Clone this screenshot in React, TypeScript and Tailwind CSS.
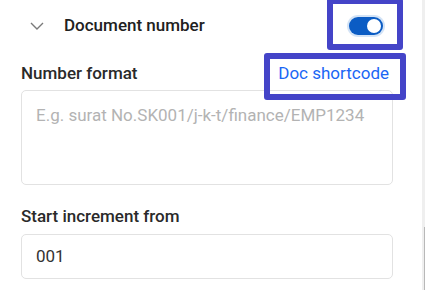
export default function App() {
  return (
    <div className="relative w-[425px] h-[290px] overflow-hidden bg-white font-['Roboto',sans-serif]">
      <div className="pl-[21px] w-[393px]">
        <div className="flex items-center h-[51px] pl-[9px] pr-[8px]">
          <svg width="14" height="8" viewBox="0 0 14 8" fill="none">
            <path d="M1 1l6 6 6-6" stroke="#7a7a7a" strokeWidth="1.4" />
          </svg>
          <span className="ml-[20px] text-[17px] font-medium text-[#212121]">Document number</span>
          <div className="ml-auto w-[38px] h-[22px] rounded-full bg-[#d3e3f6] p-[2px]">
            <div className="w-full h-full rounded-full bg-[#0b5cc4] flex items-center justify-end pr-[2px]">
              <div className="w-[14px] h-[14px] rounded-full bg-white" />
            </div>
          </div>
        </div>

        <div className="flex items-center justify-between h-[24px] mt-[11px] pr-[4px]">
          <span className="text-[17px] font-medium text-[#2a2a2a]">Number format</span>
          <span className="text-[17px] text-[#1a66f5]">Doc shortcode</span>
        </div>
        <div className="mt-[4px] h-[95px] border border-[#e2e2e2] rounded-[5px] pl-[14px] pt-[12px]">
          <span className="text-[17px] leading-[24px] text-[#b3b3b3]">E.g. surat No.SK001/j-k-t/finance/EMP1234</span>
        </div>

        <div className="mt-[20px] h-[24px] flex items-center">
          <span className="text-[17px] font-medium text-[#2a2a2a]">Start increment from</span>
        </div>
        <div className="mt-[5px] h-[45px] border border-[#e2e2e2] rounded-[5px] pl-[14px] flex items-center">
          <span className="text-[17px] text-[#333333]">001</span>
        </div>
      </div>

      <div className="absolute top-0 right-0 w-[3px] h-full bg-[#efefef]">
        <div className="absolute right-0 top-[227px] w-[1px] h-[63px] bg-[#b8b8b8]" />
      </div>

      <div className="absolute left-[327px] top-[-2px] w-[76px] h-[52px] border-[6px] border-[#4444c8] rounded-[3px]" />
      <div className="absolute left-[264px] top-[53px] w-[142px] h-[47px] border-[6px] border-[#4444c8] rounded-[3px]" />
    </div>
  );
}
